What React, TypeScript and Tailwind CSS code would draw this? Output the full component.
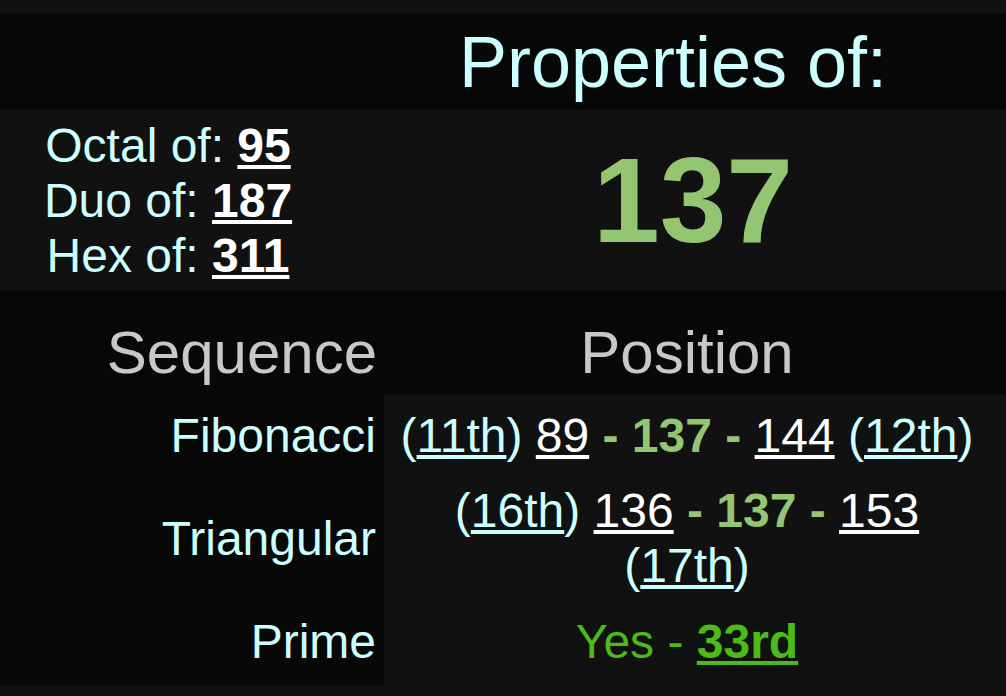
import React from 'react';

const cyan = 'text-[#ccffff]';

const Ordinal: React.FC<{ n: string }> = ({ n }) => (
  <span className={cyan}>
    (<span className="underline">{n}</span>)
  </span>
);

const Num: React.FC<{ n: string }> = ({ n }) => <span className="text-white underline">{n}</span>;

const Center: React.FC = () => <span className="font-bold text-[#93c572]">- 137 -</span>;

const rows = [
  {
    label: 'Fibonacci',
    pad: 'pt-[14px] pb-[10px]',
    content: (
      <>
        <Ordinal n="11th" /> <Num n="89" /> <Center /> <Num n="144" /> <Ordinal n="12th" />
      </>
    ),
  },
  {
    label: 'Triangular',
    pad: 'pt-[10px] pb-[10px]',
    content: (
      <>
        <Ordinal n="16th" /> <Num n="136" /> <Center /> <Num n="153" /> <Ordinal n="17th" />
      </>
    ),
  },
  {
    label: 'Prime',
    pad: 'pt-[11px] pb-[16px]',
    content: (
      <span className="text-[#4cbb17]">
        Yes - <span className="font-bold underline">33rd</span>
      </span>
    ),
  },
];

const bases = [
  { name: 'Octal', value: '95' },
  { name: 'Duo', value: '187' },
  { name: 'Hex', value: '311' },
];

export default function App() {
  return (
    <div className="min-h-screen bg-[#111111] pt-[14px] pb-[10px] font-['Liberation_Sans',Arial,sans-serif]">
      {/* Title */}
      <div className="grid h-[96px] grid-cols-[340px_1fr] items-center bg-[#080808]">
        <div />
        <div className={cn('text-center text-[72px] leading-[83px]', cyan)}>Properties of:</div>
      </div>

      {/* Number + bases */}
      <div className="grid h-[180px] grid-cols-[340px_1fr] items-center">
        <div className={cn('pr-[4px] text-center text-[48px] leading-[55px]', cyan)}>
          {bases.map((b) => (
            <div key={b.name}>
              {b.name} of: <span className="font-bold text-white underline">{b.value}</span>
            </div>
          ))}
        </div>
        <div className="pl-[40px] text-center text-[120px] font-bold leading-[138px] text-[#93c572]">
          137
        </div>
      </div>

      {/* Sequences */}
      <div className="bg-[#080808]">
        <div className="grid h-[104px] grid-cols-[384px_1fr] pt-[28px] text-[60px] leading-[69px] text-[#c8c8c8]">
          <div className="pr-[7px] text-right">Sequence</div>
          <div className="pl-[6px] pr-[22px] text-center">Position</div>
        </div>
        <div className="grid grid-cols-[384px_1fr] text-[48px] leading-[55px]">
          {rows.map((r) => (
            <React.Fragment key={r.label}>
              <div className={cn('flex items-center justify-end pr-[8px]', r.pad, cyan)}>{r.label}</div>
              <div className={cn('bg-[#111111] pl-[6px] pr-[22px] text-center', r.pad)}>{r.content}</div>
            </React.Fragment>
          ))}
        </div>
      </div>
    </div>
  );
}

function cn(...c: string[]) {
  return c.filter(Boolean).join(' ');
}
